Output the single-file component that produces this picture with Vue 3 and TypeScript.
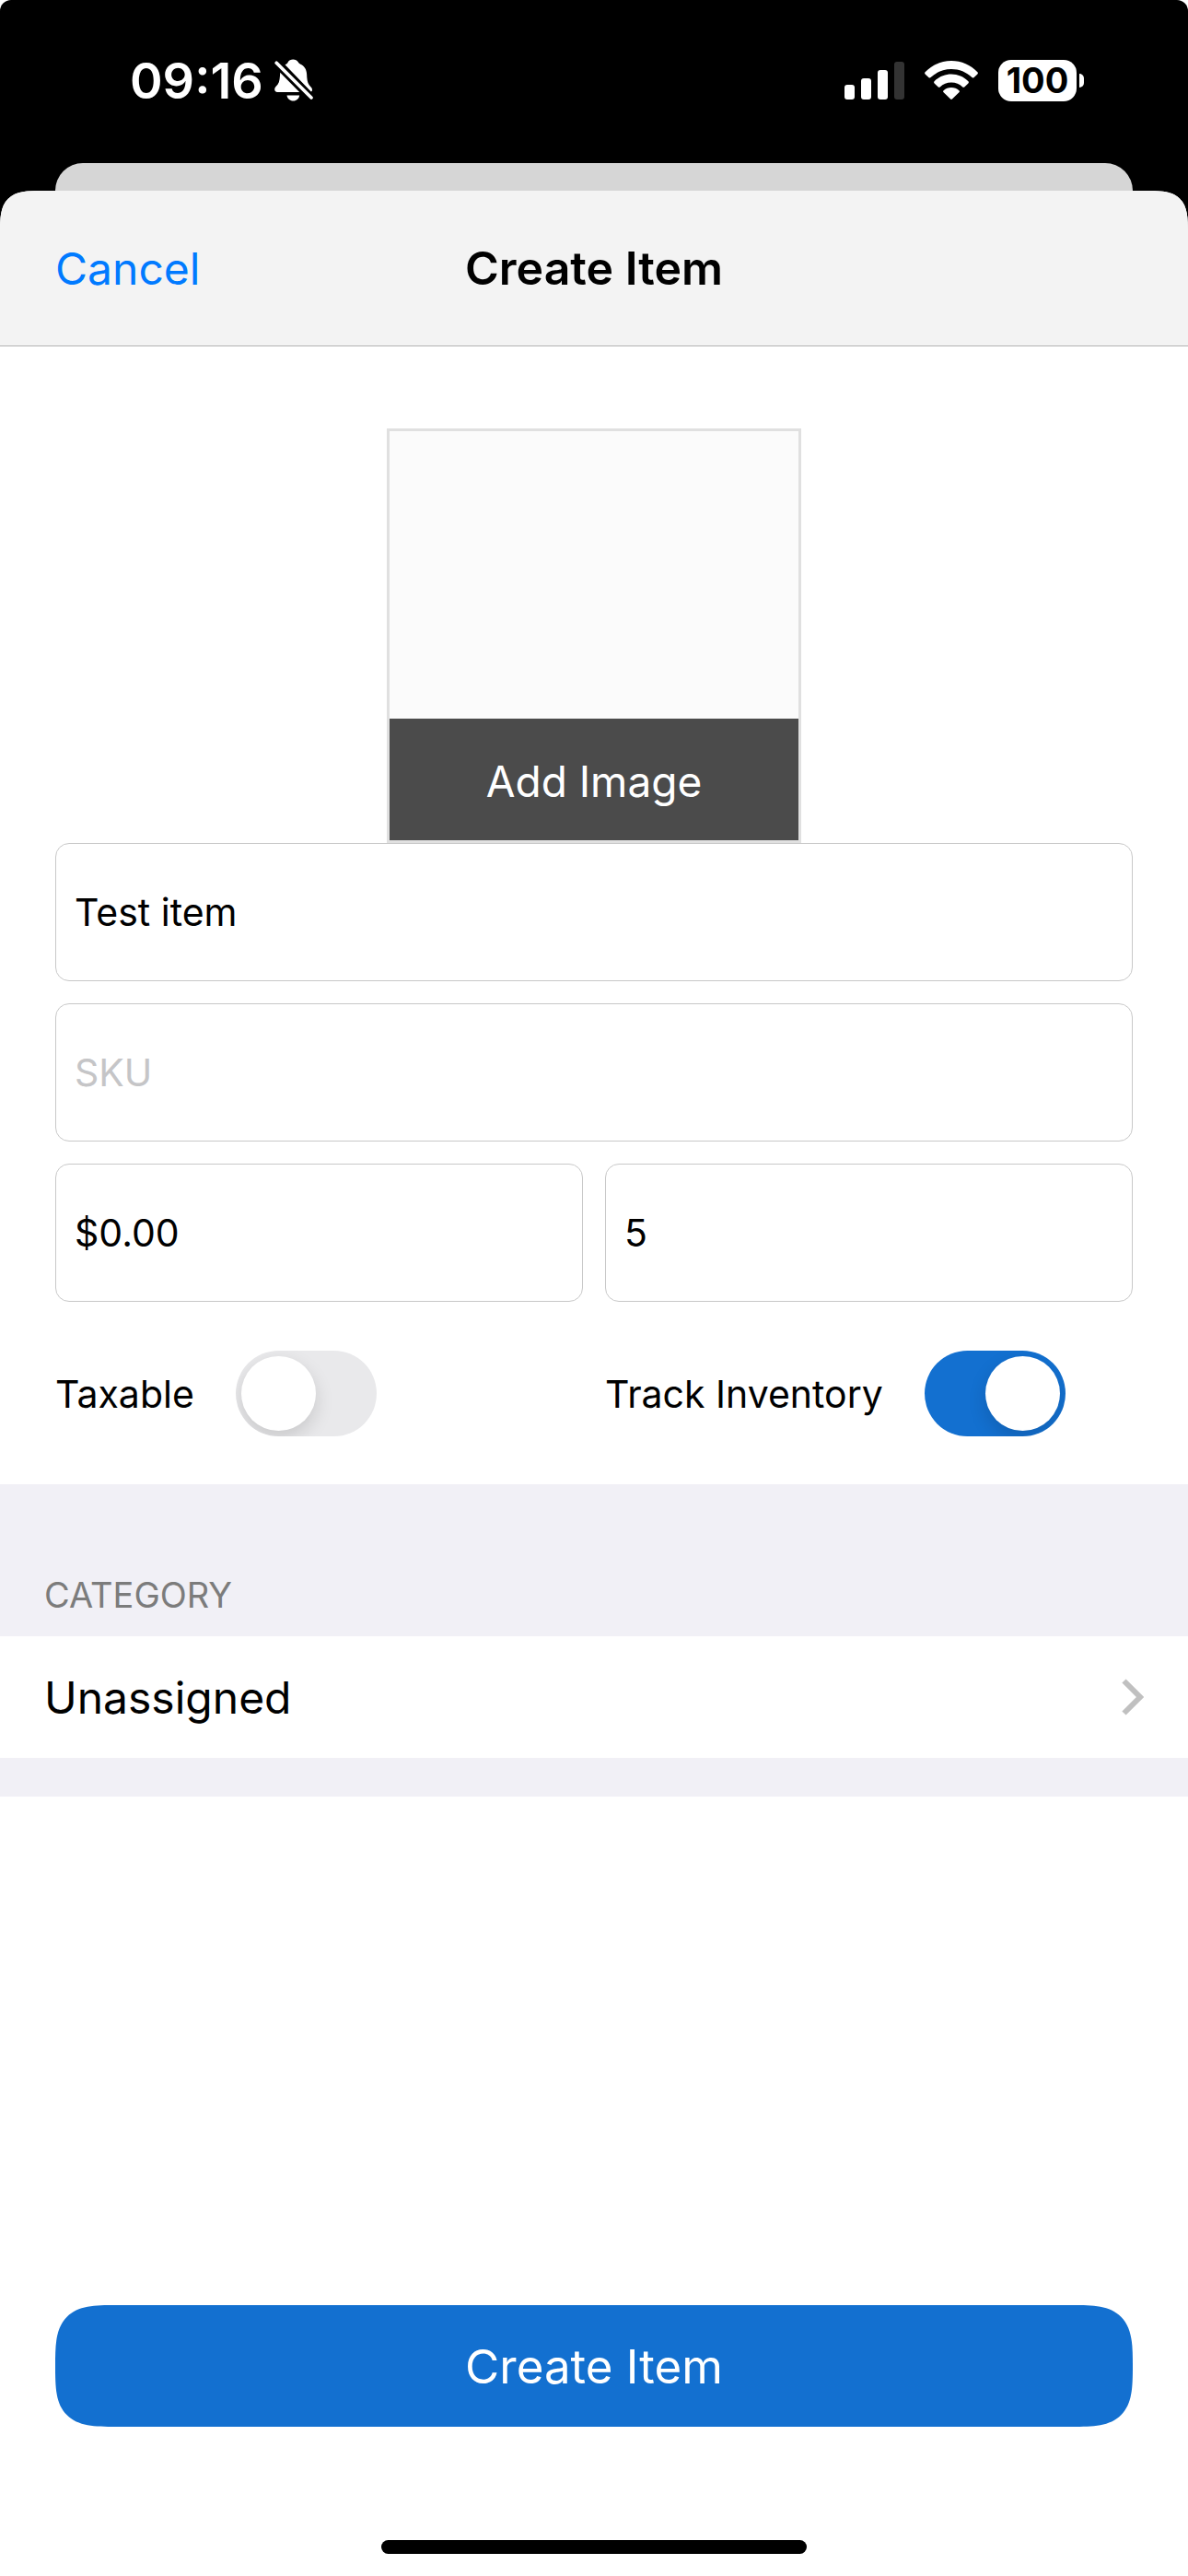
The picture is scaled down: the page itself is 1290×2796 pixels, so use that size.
<script setup lang="ts">
import { reactive } from 'vue'

interface ItemForm {
  name: string
  sku: string
  price: string
  quantity: string
  taxable: boolean
  trackInventory: boolean
  category: string
}

const form = reactive<ItemForm>({
  name: 'Test item',
  sku: '',
  price: '$0.00',
  quantity: '5',
  taxable: false,
  trackInventory: true,
  category: 'Unassigned',
})
</script>

<template>
  <div class="screen">
    <div class="status">
      <div class="clock">
        <span>09:16</span>
        <svg width="42" height="46" viewBox="0 0 42 46" aria-label="Silent mode">
          <g fill="#fff">
            <path d="M11.5 6.2C13 5.600 14 4.800 14.700 3.400C15.800 1.400 17.900 .5 20.200 .5C22.600 .5 24.700 1.500 25.900 3.500C26.500 4.500 27.200 5.200 28.400 5.800C32.600 7.900 34.900 11.500 35.100 16.300C35.300 21.500 35.700 25.500 37.700 28.200C39.400 30.300 41.300 31.400 41 34C40.900 34.900 40.400 35.400 39.700 35.500Z" />
            <path d="M6.200 14.800L27.200 36H3.200C1.300 36 .2 34.800 .2 33.100C.2 30.700 2 29.500 3.500 27.700C5.800 24.700 5.900 20.200 6.200 14.800Z" />
            <path d="M13.500 39.500H27.200C26.700 43 24 45.500 20.400 45.500S14 43 13.500 39.500Z" />
          </g>
          <path d="M2 4L40 42" stroke="#000" stroke-width="8" />
          <path d="M2.200 4.200L40 42" stroke="#fff" stroke-width="3.600" stroke-linecap="round" />
        </svg>
      </div>
      <div class="indicators">
        <svg width="65" height="41" viewBox="0 0 65 41" fill="#fff" aria-label="Signal">
          <rect x="0" y="25" width="11" height="16" rx="3" />
          <rect x="18" y="18" width="11" height="23" rx="3" />
          <rect x="36" y="9" width="11" height="32" rx="3" />
          <rect x="54" y="0" width="11" height="41" rx="3" fill="#333" />
        </svg>
        <svg width="58" height="42" viewBox="0 0 58 42" fill="#fff" aria-label="Wi-Fi">
          <path d="M.6 12.200C8 4.500 18 0 29 0S50 4.500 57.400 12.200C58.100 12.900 58.100 13.700 57.400 14.400L53.400 18.200C52.800 18.800 52 18.700 51.400 18.100C45.500 12.300 37.500 9 29 9S12.500 12.300 6.600 18.100C6 18.700 5.200 18.800 4.600 18.200L.6 14.400C-.1 13.700-.1 12.900 .6 12.200Z" />
          <path d="M10.600 22.200C15.500 17.400 22 14.600 29 14.600S42.500 17.400 47.400 22.200C48.100 22.900 48.100 23.700 47.400 24.400L43.200 28.400C42.600 29 41.900 28.900 41.300 28.400C38 25.300 33.700 23.500 29 23.500S20 25.300 16.700 28.400C16.100 28.900 15.400 29 14.800 28.400L10.600 24.400C9.900 23.700 9.900 22.900 10.600 22.200Z" />
          <path d="M20.600 32.200C22.900 30.200 25.800 29 29 29S35.100 30.200 37.400 32.200C38.100 32.900 38.100 33.600 37.400 34.300L29.900 41.500C29.300 42.100 28.700 42.100 28.100 41.500L20.600 34.300C19.900 33.600 19.900 32.900 20.600 32.200Z" />
        </svg>
        <div class="battery">
          <span class="charge">100</span>
          <span class="cap"></span>
        </div>
      </div>
    </div>

    <div class="backdrop-sheet"></div>

    <form class="sheet" @submit.prevent>
      <header class="bar">
        <button type="button" class="cancel">Cancel</button>
        <h1>Create Item</h1>
      </header>

      <section class="fields">
        <div class="photo">
          <button type="button" class="add-image">Add Image</button>
        </div>
        <div class="grid">
          <input v-model="form.name" class="field wide" type="text" aria-label="Name" placeholder="Name" />
          <input v-model="form.sku" class="field wide" type="text" aria-label="SKU" placeholder="SKU" />
          <input v-model="form.price" class="field" type="text" aria-label="Price" placeholder="Price" />
          <input v-model="form.quantity" class="field" type="text" aria-label="Quantity" placeholder="Quantity" />
        </div>
        <div class="switches">
          <div class="option">
            <label for="taxable">Taxable</label>
            <input id="taxable" v-model="form.taxable" class="switch" type="checkbox" role="switch" />
          </div>
          <div class="option">
            <label for="track">Track Inventory</label>
            <input id="track" v-model="form.trackInventory" class="switch" type="checkbox" role="switch" />
          </div>
        </div>
      </section>

      <section class="category">
        <h2>CATEGORY</h2>
        <button type="button" class="row">
          <span>{{ form.category }}</span>
          <svg width="24" height="40" viewBox="0 0 24 40" aria-hidden="true">
            <path d="M2.500 2.500L20 20L2.500 37.500" fill="none" stroke="#c0c0c0" stroke-width="6" />
          </svg>
        </button>
      </section>

      <footer class="footer">
        <button type="submit" class="submit">Create Item</button>
        <div class="home"></div>
      </footer>
    </form>
  </div>
</template>

<style>
body {
  background: #fff;
}
</style>

<style scoped>
.screen {
  box-sizing: border-box;
  min-height: 100vh;
  display: flex;
  flex-direction: column;
  background: #000;
  border-radius: 12px 12px 0 0;
  color: #000;
  font-family: Inter, "Liberation Sans", sans-serif;
}

button,
input {
  box-sizing: border-box;
  margin: 0;
  padding: 0;
  border: 0;
  background: none;
  color: inherit;
  font: inherit;
}

h1,
h2 {
  margin: 0;
}

.status {
  box-sizing: border-box;
  height: 177px;
  padding: 0 113px 3px 141px;
  display: flex;
  align-items: center;
  justify-content: space-between;
  color: #fff;
}

.clock {
  display: flex;
  align-items: center;
  gap: 12px;
  font-size: 54px;
  font-weight: 600;
}

.indicators {
  display: flex;
  align-items: center;
  gap: 22px;
}

.battery {
  display: flex;
  align-items: center;
  gap: 3px;
}

.charge {
  width: 85px;
  border-radius: 14px;
  background: #fff;
  color: #000;
  font-size: 38px;
  font-weight: 700;
  line-height: 45px;
  text-align: center;
}

.cap {
  width: 5px;
  height: 15px;
  border-radius: 0 6px 6px 0;
  background: #fff;
}

.backdrop-sheet {
  height: 30px;
  margin: 0 60px;
  border-radius: 30px 30px 0 0;
  background: #d6d6d6;
}

.sheet {
  flex: 1;
  display: flex;
  flex-direction: column;
  overflow: hidden;
  border-radius: 32px 32px 0 0;
  background: #fff;
}

.bar {
  box-sizing: border-box;
  height: 169px;
  padding: 0 60px;
  display: grid;
  grid-template-columns: 1fr auto 1fr;
  align-items: center;
  border-bottom: 1px solid #b2b2b2;
  background: #f3f3f3;
}

.cancel {
  justify-self: start;
  color: #007aff;
  font-size: 48px;
}

.bar h1 {
  font-size: 50px;
  font-weight: 600;
}

.fields {
  padding: 89px 60px 52px;
}

.photo {
  box-sizing: border-box;
  width: 450px;
  height: 450px;
  margin: 0 auto;
  display: flex;
  flex-direction: column;
  justify-content: flex-end;
  border: 3px solid #e0e0e0;
  background: #fbfbfb;
}

.add-image {
  height: 132px;
  padding-top: 4px;
  background: #4b4b4b;
  color: #fff;
  font-size: 46px;
}

.grid {
  display: grid;
  grid-template-columns: 1fr 1fr;
  gap: 24px;
}

.field {
  min-width: 0;
  height: 150px;
  padding: 0 20px;
  border: 1px solid #c8c8c8;
  border-radius: 15px;
  background: #fff;
  font-size: 41px;
}

.field::placeholder {
  color: #c5c5c7;
  opacity: 1;
}

.wide {
  grid-column: 1 / -1;
}

.switches {
  margin-top: 53px;
  display: grid;
  grid-template-columns: 1fr 1fr;
  gap: 24px;
  font-size: 41px;
}

.option {
  display: flex;
  align-items: center;
  gap: 45px;
}

.switch {
  appearance: none;
  width: 153px;
  height: 93px;
  padding: 6px;
  display: flex;
  border-radius: 47px;
  background: #e9e9eb;
  overflow: hidden;
}

.switch::before {
  content: "";
  width: 81px;
  height: 81px;
  border-radius: 50%;
  background: #fff;
  box-shadow: 0 8px 20px rgba(0, 0, 0, 0.14);
}

.switch:checked {
  justify-content: flex-end;
  background: #1370d0;
}

.category {
  padding: 93px 0 42px;
  background: #f1f0f6;
}

.category h2 {
  padding: 0 48px 18px;
  color: #7c7c7c;
  font-size: 38px;
  font-weight: 400;
  line-height: 54px;
}

.row {
  width: 100%;
  height: 132px;
  padding: 0 48px;
  display: flex;
  align-items: center;
  justify-content: space-between;
  background: #fff;
  font-size: 48px;
}

.footer {
  margin-top: auto;
  padding: 0 60px 24px;
  display: flex;
  flex-direction: column;
  align-items: center;
  gap: 123px;
}

.submit {
  width: 100%;
  height: 132px;
  border-radius: 48px;
  background: #1370d0;
  color: #fff;
  font-size: 51px;
}

.home {
  width: 462px;
  height: 15px;
  border-radius: 8px;
  background: #000;
}

@supports (corner-shape: superellipse(1.7)) {
  .sheet {
    border-radius: 46px 46px 0 0;
    corner-shape: superellipse(1.7);
  }

  .submit {
    border-radius: 66px;
    corner-shape: superellipse(1.7);
  }
}
</style>
